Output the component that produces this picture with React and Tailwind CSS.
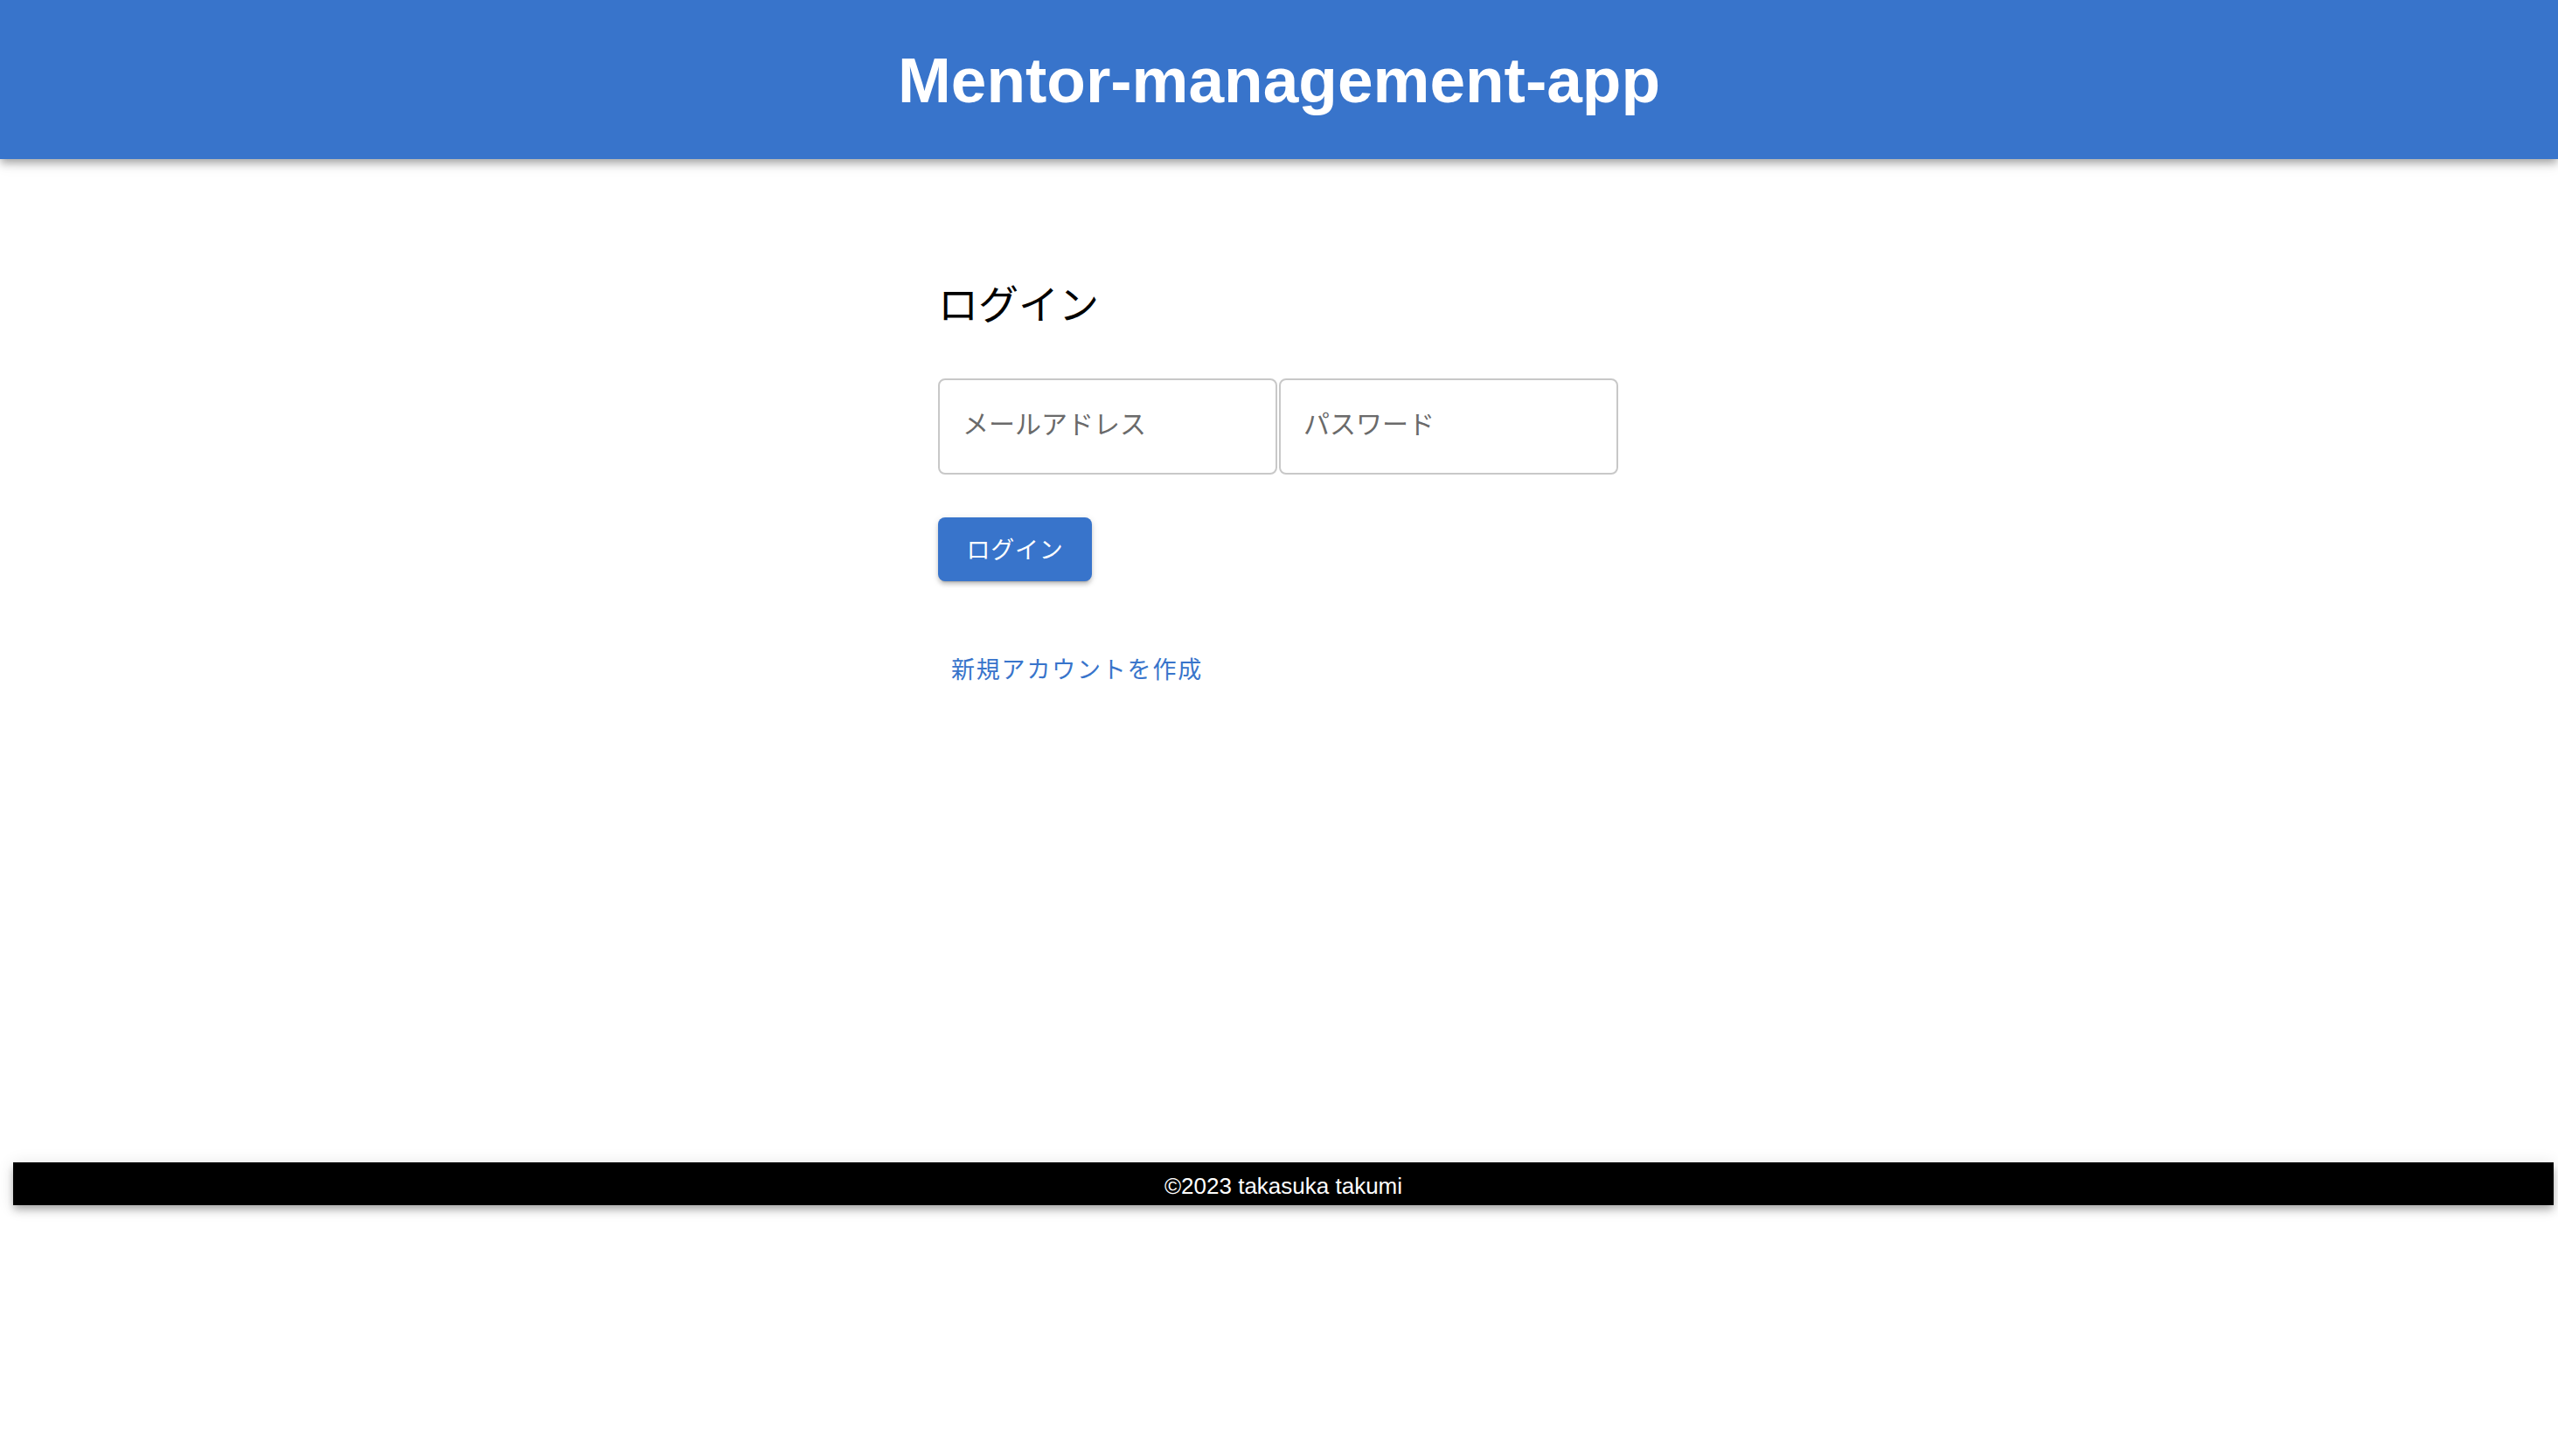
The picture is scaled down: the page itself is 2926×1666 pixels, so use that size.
import React from "react";

const jp = { fontFamily: '"Noto Sans CJK JP", "Noto Sans", sans-serif' };
const latin = { fontFamily: '"Liberation Sans", Arial, sans-serif' };

const Header = () => (
    <header className="relative z-10 h-[182px] bg-[#3874cb] flex items-center justify-center shadow-[0_4px_8px_-2px_rgba(0,0,0,0.2),0_7px_9px_0_rgba(0,0,0,0.14),0_2px_19px_0_rgba(0,0,0,0.12)]">
        <h1 style={latin} className="text-white font-bold text-[73px] leading-none">
            Mentor-management-app
        </h1>
    </header>
);

const LoginForm = () => (
    <main style={jp} className="h-[1148px] pt-[133px]">
        <div className="mx-auto w-[780px] flex flex-col items-start">
            <h2 className="h-[60px] text-[46px] leading-[60px] text-black font-normal">ログイン</h2>

            <div className="mt-[58px] flex gap-[2px]">
                <input
                    type="email"
                    placeholder="メールアドレス"
                    className="w-[388px] h-[110px] rounded-[8px] border-2 border-[#c8c8c8] px-[26px] pb-[10px] text-[30px] text-black placeholder:text-[#6a6a6a] outline-none"
                />
                <input
                    type="password"
                    placeholder="パスワード"
                    className="w-[388px] h-[110px] rounded-[8px] border-2 border-[#c8c8c8] px-[26px] pb-[10px] text-[30px] text-black placeholder:text-[#6a6a6a] outline-none"
                />
            </div>

            <button className="mt-[49px] w-[176px] h-[73px] rounded-[8px] bg-[#3874cb] text-white text-[27px] tracking-[0.8px] flex items-center justify-center shadow-[0_5px_2px_-4px_rgba(0,0,0,0.2),0_4px_4px_0_rgba(0,0,0,0.14),0_2px_9px_0_rgba(0,0,0,0.12)]">
                ログイン
            </button>

            <a
                href="#"
                className="mt-[66px] h-[68px] px-[15px] flex items-center text-[27px] tracking-[1.8px] text-[#3874cb]"
            >
                新規アカウントを作成
            </a>
        </div>
    </main>
);

const Footer = () => (
    <footer className="ml-[15px] mr-[5px] h-[49px] bg-black flex items-center justify-center shadow-[0_4px_8px_-2px_rgba(0,0,0,0.2),0_7px_9px_0_rgba(0,0,0,0.14),0_2px_19px_0_rgba(0,0,0,0.12)]">
        <p style={latin} className="text-white text-[26px] leading-none pt-[4px]">
            ©2023 takasuka takumi
        </p>
    </footer>
);

export default function App() {
    return (
        <div className="min-h-[1666px] bg-white">
            <Header />
            <LoginForm />
            <Footer />
        </div>
    );
}
